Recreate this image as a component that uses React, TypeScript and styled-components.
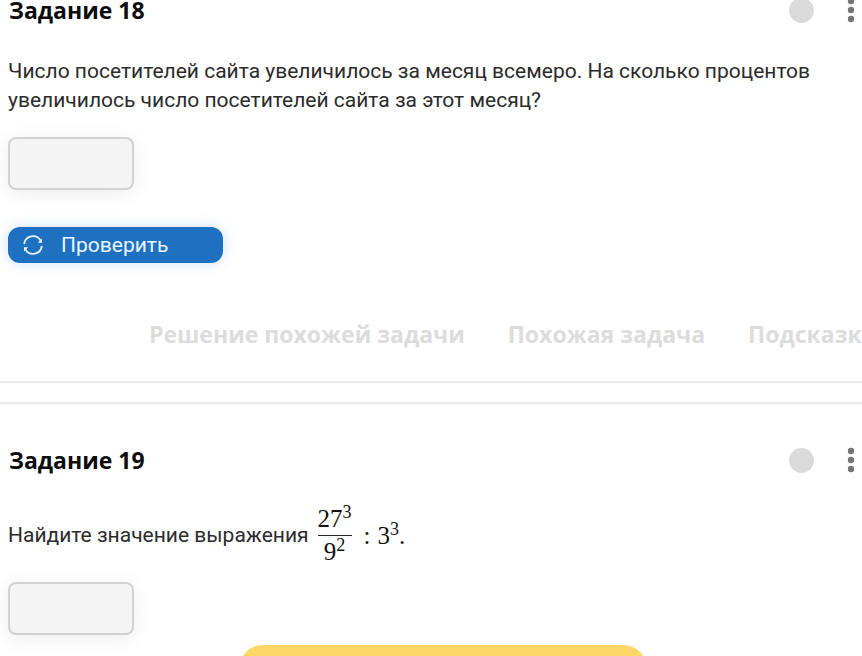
import React from "react";
import styled, { createGlobalStyle } from "styled-components";

const Global = createGlobalStyle`
  *, *::before, *::after { box-sizing: border-box; }
  body { margin: 0; background: #fff; color: #2b2b2b; font: 21px/29px Roboto, sans-serif; overflow: hidden; }
`;

const Page = styled.main`
  height: 100vh;
  overflow: hidden;
`;

const Card = styled.section<{ $next?: boolean }>`
  padding-top: ${(p) => (p.$next ? "40px" : "0")};
  border: 0 solid #ebebeb;
  border-width: ${(p) => (p.$next ? "2px 0 0" : "0 0 2px")};
  margin-bottom: 19px;
`;

const Header = styled.header<{ $compact?: boolean }>`
  display: flex;
  align-items: center;
  height: ${(p) => (p.$compact ? "20px" : "32px")};
  padding: 0 2px 0 9px;
`;

const Title = styled.h2`
  flex: 1;
  margin: 0;
  font: 700 23px/20px "Open Sans", sans-serif;
  color: #0c0c0c;
`;

const Status = styled.span`
  width: 25px;
  height: 25px;
  margin-right: 28px;
  border-radius: 50%;
  background: #dadada;
`;

const Menu = styled.button`
  display: flex;
  justify-content: center;
  width: 18px;
  padding: 0;
  border: 0;
  background: none;
  color: #757575;
`;

const Body = styled.div`
  padding: 0 8px;
`;

const Question = styled.p`
  margin: 37px 0 22px;
`;

const Formula = styled.p`
  display: flex;
  align-items: center;
  margin: 27px 0 14px;
`;

const Answer = styled.input`
  display: block;
  width: 126px;
  height: 53px;
  padding: 0 12px;
  border: 2px solid #d2d2d2;
  border-radius: 8px;
  background: #f4f4f4;
  box-shadow: 0 3px 20px #00000014;
  font: inherit;
`;

const Check = styled.button`
  display: flex;
  align-items: center;
  gap: 18px;
  width: 215px;
  height: 36px;
  margin-top: 37px;
  padding: 0 15px;
  border: 0;
  border-radius: 12px;
  background: #1e70c1;
  box-shadow: 0 0 14px #1e70c138;
  color: #e8f6ff;
  font: 21px/24px Roboto, sans-serif;
`;

const Links = styled.nav`
  display: flex;
  gap: 43px;
  padding: 55px 0 31px 149px;
  white-space: nowrap;
  overflow: hidden;
`;

const HelpLink = styled.a`
  font: 700 23px/32px "Open Sans", sans-serif;
  color: #dcdcdc;
  text-decoration: none;
`;

const MathText = styled.span`
  display: flex;
  align-items: center;
  margin-left: 9px;
  color: #111;
  font: 25px/32px "Liberation Serif", serif;
  sup { font-size: 18px; line-height: 0; vertical-align: 9px; }
`;

const Fraction = styled.span`
  display: grid;
  text-align: center;
`;

const Numerator = styled.span`
  border-bottom: 1px solid #222;
`;

const Colon = styled.span`
  margin: 0 7px 0 12px;
`;

const BannerRow = styled.div`
  display: flex;
  justify-content: center;
  padding: 10px 0 0 24px;
`;

const Banner = styled.div`
  width: 408px;
  height: 48px;
  border-radius: 24px;
  background: #ffd766;
`;

function TaskHeader({ number, compact }: { number: number; compact?: boolean }) {
  return (
    <Header $compact={compact}>
      <Title>Задание {number}</Title>
      <Status />
      <Menu aria-label="Меню">
        <svg width="8" height="26" viewBox="0 0 8 26" fill="currentColor">
          <circle cx="4" cy="4" r="3.2" />
          <circle cx="4" cy="13" r="3.2" />
          <circle cx="4" cy="22" r="3.2" />
        </svg>
      </Menu>
    </Header>
  );
}

function RefreshIcon() {
  return (
    <svg width="20" height="20" viewBox="0 0 20 20" fill="none" stroke="currentColor" strokeWidth="1.8">
      <path d="M1.2 9.2A8.8 8.8 0 0 1 17.6 5.6M18.8 10.8A8.8 8.8 0 0 1 2.4 14.4" />
      <path d="M19 3.6v4.2h-4.2zM1 16.4v-4.2h4.2z" fill="currentColor" stroke="none" />
    </svg>
  );
}

export default function App() {
  return (
    <Page>
      <Global />
      <Card>
        <TaskHeader number={18} compact />
        <Body>
          <Question>
            Число посетителей сайта увеличилось за месяц всемеро. На сколько процентов увеличилось число посетителей сайта за этот месяц?
          </Question>
          <Answer aria-label="Ответ 18" />
          <Check>
            <RefreshIcon />
            Проверить
          </Check>
        </Body>
        <Links>
          <HelpLink href="#solution">Решение похожей задачи</HelpLink>
          <HelpLink href="#similar">Похожая задача</HelpLink>
          <HelpLink href="#hint">Подсказка</HelpLink>
        </Links>
      </Card>
      <Card $next>
        <TaskHeader number={19} />
        <Body>
          <Formula>
            Найдите значение выражения
            <MathText>
              <Fraction>
                <Numerator>27<sup>3</sup></Numerator>
                <span>9<sup>2</sup></span>
              </Fraction>
              <Colon>:</Colon>
              <span>3<sup>3</sup>.</span>
            </MathText>
          </Formula>
          <Answer aria-label="Ответ 19" />
        </Body>
        <BannerRow>
          <Banner />
        </BannerRow>
      </Card>
    </Page>
  );
}
